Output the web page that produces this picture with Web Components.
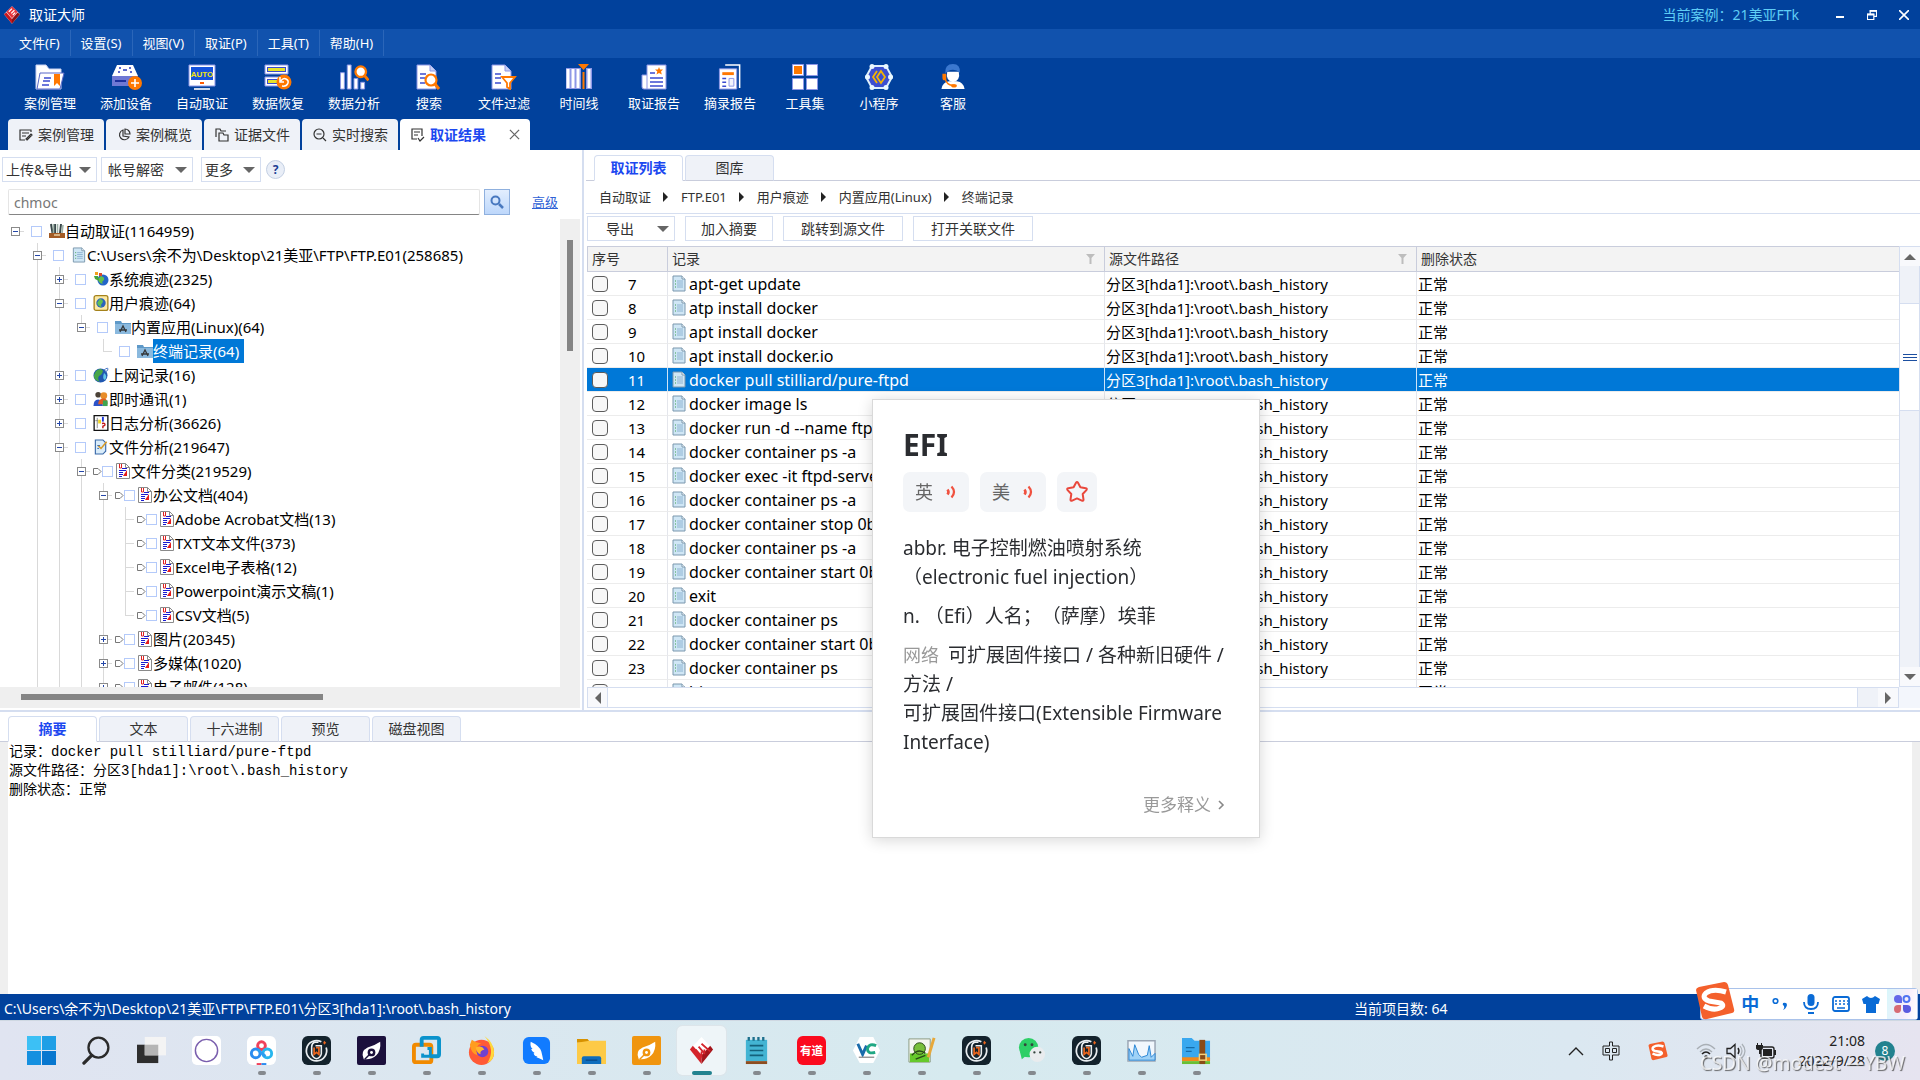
<!DOCTYPE html>
<html lang="zh-CN">
<head>
<meta charset="utf-8">
<title>取证大师</title>
<style>
  html, body { height: 100%; }
  body {
    margin: 0;
    overflow: hidden;
    background: #fff;
    color: #333;
    font: 14px/20px "Noto Sans", "Noto Sans CJK SC", sans-serif;
    --navy: #01419c;
    --line: #d5def0;
    --rule: #c9cddc;
    --pale: #eff2f8;
    --pick: #0078d7;
    --accent: #1c48f0;
  }
</style>
</head>
<body>
<forensic-app></forensic-app>

<script>
const ICONS = {
  // brand
  logo: ["0 0 20 22", `<path d="M10 0 20 10 10 22 0 10Z" fill="#f4f4f6"/><path d="M0 10 10 22V16L3 8Z" fill="#c8161d"/><path d="M20 10 10 22V16L17 8Z" fill="#8e1015"/><path d="M3 7 10 0 17 7 10 15Z" fill="#e8333a"/><path d="M6 7l4-4M9 9l4-4M11 11l3-3" stroke="#fff" stroke-width="1.6"/>`],

  // main tool bar
  caseBox: ["0 0 30 26", `<path d="M1 25V1h10l3 4h12v20Z" fill="#fff" stroke="#c9d2f3"/><path d="M5 9h24l-4 16H2Z" fill="#fff" stroke="#5868c8"/><path d="M9 14h7M8 17h7M7 21h7" stroke="#3b4bd0" stroke-width="1.6"/><path d="M19 10h6v12l-3-3-3 3Z" fill="#ff7800"/>`],
  addDisk: ["0 0 32 26", `<path d="M7 1h16l5 11H2Z" fill="#fff"/><path d="M2 12h26v10H2Z" fill="#6f78d4"/><path d="M5 17h11" stroke="#1d2f9e" stroke-width="2"/><path d="M9 4h2M19 4h2M8 8h2M20 8h2M13 6h4" stroke="#5d68cc" stroke-width="2"/><circle cx="25" cy="19" r="7" fill="#ff7800"/><path d="M25 15v8M21 19h8" stroke="#fff" stroke-width="1.6"/>`],
  auto: ["0 0 28 26", `<path d="M1 1h26v21H1Z" fill="#fff" stroke="#8d97e6"/><path d="M3 3h22v13H3Z" fill="#1452dc"/><text x="14" y="13" text-anchor="middle" font-family="Liberation Sans" font-size="8" font-weight="700" fill="#f4e60c">AUTO</text><path d="M12 19h4" stroke="#ff5a00" stroke-width="2"/><path d="M6 25h16" stroke="#fff" stroke-width="1.6"/>`],
  restore: ["0 0 28 26", `<path d="M1 1h23v9H1Z" fill="#fff" stroke="#8d97e6"/><path d="M3 5.500h19" stroke="#3b4bd0" stroke-width="5"/><path d="M4 5.500h17" stroke="#e6e32a" stroke-width="3"/><path d="M1 13h16v9H1Z" fill="#fff" stroke="#8d97e6"/><path d="M3 17.500h11" stroke="#3b4bd0" stroke-width="5"/><path d="M4 17.500h9" stroke="#e6e32a" stroke-width="3"/><circle cx="20" cy="18" r="7.500" fill="#ff7800"/><path d="M18 22c6 1 8-5 4-7-2-1-4 0-5 2M16 13v5h4" fill="none" stroke="#fff" stroke-width="1.500"/>`],
  analyse: ["0 0 30 27", `<g fill="#fff" stroke="#8d97e6"><path d="M1 9h4v17H1ZM8 1h4v25H8ZM15 15h4v11h-4ZM22 19h4v7h-4Z"/></g><circle cx="22" cy="8" r="5.5" fill="#fff" stroke="#ff7800" stroke-width="2.4"/><path d="m26 12 4 5" stroke="#ff7800" stroke-width="3"/>`],
  search: ["0 0 26 26", `<path d="M1 1h13l6 6v18H1Z" fill="#fff" stroke="#8d97e6"/><path d="M14 1v6h6" fill="#c8d0f5" stroke="#8d97e6"/><path d="M4 10h6M4 14h5M4 19h5" stroke="#3b4bd0" stroke-width="1.6"/><circle cx="15" cy="16" r="5.5" fill="#fff" stroke="#ff7800" stroke-width="2.2"/><path d="m19 20 4 5" stroke="#ff7800" stroke-width="3"/>`],
  filter: ["0 0 26 26", `<path d="M1 1h13l6 6v18H1Z" fill="#fff" stroke="#8d97e6"/><path d="M14 1v6h6" fill="#c8d0f5" stroke="#8d97e6"/><path d="M4 10h6M4 14h6M4 19h6" stroke="#3b4bd0" stroke-width="1.6"/><path d="M11 13h13l-5 6v6l-3-2v-4Z" fill="#fff" stroke="#ff7800" stroke-width="1.8"/>`],
  timeline: ["0 0 28 26", `<path d="M1 4h15v21H1ZM21 4h6v21h-6Z" fill="#8d97e6"/><path d="M3 5v19M8 5v19M13 5v19M24 5v19" stroke="#fff" stroke-width="3"/><path d="M13 0h11l-5.500 6Z" fill="#ff7800"/><path d="M18.500 8v17" stroke="#ff7800" stroke-width="2"/>`],
  report: ["0 0 26 26", `<path d="M6 1h19v24H3q-2 0-2-2V11h5Z" fill="#fff" stroke="#8d97e6"/><path d="M6 11v14" stroke="#8d97e6"/><path d="M9 9h5M9 14h13M9 18h13M9 22h13" stroke="#3b4bd0" stroke-width="1.600"/><path d="m18 3 1 2.500h3L20 7.500l.8 3L18 9l-2.500 1.500.8-3L14 5.500h3Z" fill="#ff7800"/>`],
  excerpt: ["0 0 24 27", `<path d="M7 1h15v24" fill="none" stroke="#fff" stroke-width="1.600"/><path d="M1 5h18v21H1Z" fill="#fff" stroke="#8d97e6"/><path d="M4 10h12" stroke="#ff7800" stroke-width="3"/><path d="M4 15h4M4 19h4M4 23h4" stroke="#3b4bd0" stroke-width="1.600"/><path d="M11 15h5v8h-5Z" fill="#f2f4fc" stroke="#8d97e6"/>`],
  tools: ["0 0 26 26", `<g fill="#fff" stroke="#8d97e6"><path d="M.500.500h11v11H.500ZM14.500.500h11v11h-11ZM.500 14.500h11v11H.500ZM14.500 14.500h11v11h-11Z"/></g><path d="M2 2h8v8H2Z" fill="#ff7800"/>`],
  applet: ["0 0 28 26", `<path d="M7 2h14l6 11-6 11H7L1 13Z" fill="#3c4fd0" stroke="#dff0fb" stroke-width="2"/><g fill="#eaf8ff"><circle cx="7" cy="2.500" r="2.500"/><circle cx="21" cy="2.500" r="2.500"/><circle cx="2.500" cy="13" r="2.500"/><circle cx="25.500" cy="13" r="2.500"/><circle cx="7" cy="23.500" r="2.500"/><circle cx="21" cy="23.500" r="2.500"/></g><path d="M12 7 8 13l4 6M16 7l-4 6 4 6 4-6Z" fill="none" stroke="#f5b400" stroke-width="1.800"/>`],
  service: ["0 0 26 27", `<path d="M1 26q1-7 8-8h8q7 1 8 8Z" fill="#fff"/><path d="M7 8h12q2 9-6 11-8-2-6-11Z" fill="#fff"/><path d="M5 10Q4 0 13 0q8 0 7 9-3-3-7-3-5 0-8 4Z" fill="#3b78cf"/><path d="M2 10h4v7H4q-2 0-2-3Z" fill="#ff7800"/><path d="M5 16q2 6 8 6" fill="none" stroke="#ff7800" stroke-width="1.500"/><ellipse cx="14" cy="22.500" rx="3" ry="1.800" fill="#ff7800"/>`],

  // page tabs
  tabEdit: ["0 0 14 14", `<path d="M6 12H1V2h11v2M3 5h7M3 8h4M8 12l5-5-1-1-5 5Z" fill="none" stroke="#333" stroke-width="1.200"/>`],
  tabPie: ["0 0 14 14", `<path d="M6 2a5 5 0 1 0 6 7L6 8Z M8 1v5h5a5 5 0 0 0-5-5Z" fill="none" stroke="#333" stroke-width="1.200"/>`],
  tabFiles: ["0 0 14 14", `<path d="M1 9V1h4l1 2h5M4 13V5h4l1 2h4v6Z" fill="none" stroke="#333" stroke-width="1.200"/>`],
  tabLive: ["0 0 14 14", `<circle cx="6" cy="6" r="5" fill="none" stroke="#333" stroke-width="1.200"/><path d="M3.500 6h5M10 10l3 3" stroke="#333" stroke-width="1.200"/>`],
  tabResult: ["0 0 14 14", `<path d="M6 11H1V1h10v7M3 4h6M3 7h4M7 10l2 3 4-4" fill="none" stroke="#333" stroke-width="1.200"/>`],
  close: ["0 0 12 12", `<path d="m1 1 10 10M11 1 1 11" stroke="#666" stroke-width="1.400"/>`],

  // title bar buttons
  winMin: ["0 0 10 10", `<path d="M1 7h8" stroke="#fff" stroke-width="2"/>`],
  winRestore: ["0 0 11 11", `<path d="M3.500 4V1h7v6H8M.500 4.500h7v6h-7Z" fill="none" stroke="#fff" stroke-width="1.300"/><path d="M3 1h8M0 5h8" stroke="#fff" stroke-width="2"/>`],
  winClose: ["0 0 10 10", `<path d="m0 0 10 10M10 0 0 10" stroke="#fff" stroke-width="1.600"/>`],

  // side pane
  magnifier: ["0 0 14 14", `<circle cx="5.500" cy="5.500" r="4" fill="none" stroke="#4878bf" stroke-width="2"/><path d="m9 9 4 4" stroke="#4878bf" stroke-width="2.500"/>`],
  tDesk: ["0 0 16 16", `<path d="M0 10h16v5H0Z" fill="#a35b24"/><path d="M5 12h6" stroke="#e9cfa2" stroke-width="1.500"/><path d="M2 1l1.500 9M6 1v9M12 1l-1 9" stroke="#39484a" stroke-width="2"/><path d="M4.500 1v9M8.500 1v9M14 2l-1 8" stroke="#9fb3a8" stroke-width="1.600"/>`],
  doc: ["0 0 14 17", `<path d="M1 1h9l3 3v12H1Z" fill="#cfe6f5" stroke="#7b97ad"/><path d="M10 1v3h3" fill="#fff" stroke="#7b97ad"/><path d="M3 6h1M3 9h1M3 12h1" stroke="#3da04c"/><path d="M5 6h6M5 8h6M5 10h6M5 12h6" stroke="#7fa7c9" stroke-width=".8"/>`],
  tSystem: ["0 0 16 16", `<circle cx="10" cy="9" r="5.500" fill="#2465c8"/><path d="M8 5q4 1 3 4-3 2-1 4-5-1-5-5Z" fill="#62bf4b"/><path d="M2 1h3v3H2Z" fill="#f2a11d"/><path d="M6 2h3v3H6Z" fill="#d94a2a"/><path d="M1 5h4l1 5-4-2Z" fill="#46a53c"/>`],
  tUser: ["0 0 16 17", `<rect x=".700" y=".700" width="14.600" height="15.600" rx="2" fill="#fbe9a4" stroke="#a5821b" stroke-width="1.400"/><circle cx="8" cy="8.500" r="5" fill="#2a63bd"/><path d="M7 4q5 2 2 5-2 2 0 4-5-1-5-5Z" fill="#5fbf56"/>`],
  tApp: ["0 0 16 14", `<path d="M0 1h6l1 2h9v11H0Z" fill="#5e99c8"/><path d="M0 4h16v10H0Z" fill="#8ab9de"/><path d="m5 12 3-6 3 6M4 10h8" fill="none" stroke="#35383b" stroke-width="1.300"/>`],
  tWeb: ["0 0 16 16", `<circle cx="7.500" cy="8.500" r="7" fill="#1f57b0"/><path d="M3 4q5-4 7 0-1 4-4 5-2 3 1 6-7-2-6-7Z" fill="#48a64a"/><path d="M11 6q4 3 1 7-3-1-1-7Z" fill="#62c6e6"/><path d="M11 3q4-3 4-1t-3 3" fill="none" stroke="#4a7ac8"/>`],
  tChat: ["0 0 16 17", `<circle cx="5" cy="4" r="3" fill="#4b4238"/><path d="M0 16q0-7 5-7t5 7Z" fill="#2c53c9"/><circle cx="11" cy="5" r="3.600" fill="#e88d2a"/><path d="M5 14q0-6 6-6 4 0 4 6Z" fill="#e05d24"/><path d="M10 10h5v6h-5Z" fill="#3fa551"/>`],
  tLog: ["0 0 16 17", `<path d="M.700.700h14.600v15.600H.700Z" fill="#fff" stroke="#111" stroke-width="1.400"/><path d="M4 3v11M2 6h3" stroke="#888"/><path d="M10 2v5" stroke="#1c36d8" stroke-width="2"/><path d="M5 5h3v4H5Z" fill="#f0d622"/><path d="M9 9q4-1 3 2l-2 1v2" fill="none" stroke="#c21919" stroke-width="1.500"/>`],
  tFile: ["0 0 16 17", `<path d="M2 1h8l3 3v9l-3 3H2Z" fill="#d9ecfa" stroke="#3868a8" stroke-width="1.200"/><path d="m5 7 3 3 6-7" fill="none" stroke="#d99924" stroke-width="1.600"/><path d="M4 7h3M4 10h2" stroke="#3868a8"/>`],
  tClass: ["0 0 14 16", `<path d="M.500.500h9l4 4v11H.500Z" fill="#fff" stroke="#8a8a8a"/><path d="M9.500.500v4h4" fill="none" stroke="#8a8a8a"/><path d="M3.500 1v4h2V1" fill="none" stroke="#d22"/><path d="M6 5.500h5M3 7.500h7M3 9.500h4M3 11.500h4M3 13.500h3" stroke="#1a1ad0"/><path d="m7 13 4-6v6Z" fill="#e51c1c"/>`],
  tag: ["0 0 9 9", `<path d="M.500 1.500H5l3 3-3 3H.500Z" fill="#fff" stroke="#777"/>`],
  funnel: ["0 0 9 11", `<path d="M0 0h9L5.500 4v6h-2V4Z" fill="#bdbdbd"/>`],

  // dictionary card
  sound: ["0 0 12 14", `<path d="M2.500 4.500q2 2.500 0 5" fill="none" stroke="#f0513f" stroke-width="2.600"/><path d="M6.500 1.500q5 5.500 0 11" fill="none" stroke="#f0513f" stroke-width="2.200"/>`],
  star: ["0 0 24 24", `<path d="M11 2.700q1-1.600 2 0l2.400 4.600 5.400.9q1.700.5.600 1.900l-3.700 3.900.8 5.600q-.1 1.600-1.700 1L12 18.400l-4.800 2.200q-1.600.6-1.700-1l.8-5.600-3.700-3.900q-1.100-1.400.6-1.900l5.400-.9Z" fill="none" stroke="#e9483c" stroke-width="2" stroke-linejoin="round"/>`],
  chevron: ["0 0 8 12", `<path d="m2 2 4 4-4 4" fill="none" stroke="#888" stroke-width="1.600"/>`],

  // input method bar
  sogou: ["0 0 40 38", `<path d="M1 8Q1 6 4 5L29 0q3 0 4 3l6 24q1 3-2 4L12 37q-4 1-5-2Z" fill="#f4602c"/><path d="M31 10Q18 6 11 11q-5 5 3 8l12 2q4 3-1 5-7 3-16-2" fill="none" stroke="#fff" stroke-width="5"/>`],
  imePunct: ["0 0 16 14", `<circle cx="3.500" cy="4" r="2.300" fill="none" stroke="#0a6bd6" stroke-width="1.600"/><path d="M11 6q4-1 4 2-1 4-4 5 2-2 1-4-2-1-1-3Z" fill="#0a6bd6"/>`],
  imeMic: ["0 0 16 20", `<rect x="4.500" y="0" width="7" height="12" rx="3.500" fill="#0a6bd6"/><path d="M1 8q0 7 7 7t7-7" fill="none" stroke="#0a6bd6" stroke-width="1.800"/><path d="M5 19h6" stroke="#0a6bd6" stroke-width="2"/>`],
  imeKeys: ["0 0 18 16", `<rect x="1" y="1" width="16" height="14" rx="2" fill="none" stroke="#0a6bd6" stroke-width="1.800"/><path d="M3 5h2M7 5h2M11 5h2M15 5h1M3 8h2M7 8h2M11 8h2M15 8h1M5 12h8" stroke="#0a6bd6" stroke-width="1.600"/>`],
  imeShirt: ["0 0 18 17", `<path d="M5 0q4 4 8 0l5 3-1.500 5H14v9H4V8H1.500L0 3Z" fill="#0a6bd6"/>`],
  imeGrid: ["0 0 18 18", `<path d="M1 4q0-4 4-4t4 4v4H5Q1 8 1 4Z" fill="#6468e8"/><circle cx="13.500" cy="4" r="3" fill="none" stroke="#4f74f2" stroke-width="2"/><path d="M1 14q0-4 4-4h3v4q0 4-3.500 4T1 14Z" fill="#d66b74"/><path d="M10 10h4q4 0 4 4t-4 4-4-4Z" fill="#5a5ae0"/>`],

  // task bar
  win: ["0 0 30 30", `<path d="M0 0h14.500v14.500H0Z" fill="#3cc0f5"/><path d="M15.500 0H30v14.500H15.500Z" fill="#1f9fe6"/><path d="M0 15.500h14.500V30H0Z" fill="#1590e0"/><path d="M15.500 15.500H30V30H15.500Z" fill="#0877cf"/>`],
  find: ["0 0 30 30", `<circle cx="17" cy="12" r="10.300" fill="none" stroke="#2a2a2a" stroke-width="2.400"/><path d="m10 20-8 8" stroke="#2a2a2a" stroke-width="3.400" stroke-linecap="round"/>`],
  views: ["0 0 30 30", `<path d="M0 9h22v19H0Z" fill="#2e2e2e"/><path d="M8 1h22v19H8Z" fill="#f4f4f4"/><path d="M8 9h14v11H8Z" fill="#b5b5b5"/>`],
  cortana: ["0 0 30 30", `<rect width="30" height="30" rx="5" fill="#fff"/><circle cx="15" cy="15" r="11.500" fill="none" stroke="#7a5fae" stroke-width="1.500"/>`],
  cloud: ["0 0 30 30", `<rect width="30" height="30" rx="6" fill="#fff"/><g fill="none" stroke-width="3"><circle cx="15" cy="10" r="4" stroke="#f0415a"/><circle cx="9" cy="18" r="4.500" stroke="#2b8cf0"/><circle cx="21" cy="18" r="4.500" stroke="#27b6ee"/></g><path d="m11 14 8 7" stroke="#2b9cf0" stroke-width="3"/><path d="M10 29h5" stroke="#f0415a" stroke-width="2"/><path d="M15 29h5" stroke="#2b8cf0" stroke-width="2"/>`],
  claw: ["0 0 30 30", `<rect width="30" height="30" rx="6" fill="#13222c"/><path d="M20 6A10.500 10.500 0 1 0 25 12" fill="none" stroke="#e9edf0" stroke-width="1.800"/><path d="M17 6.500h-4q-3 1-3 5v7q1 4 5 5 4-1 5-5V10h-6" fill="none" stroke="#e9edf0" stroke-width="1.600"/><path d="M12.500 12v7l2.500-2 2.500 2v-7h-3" fill="none" stroke="#e8641d" stroke-width="1.800"/><path d="m23 5 2 2-2 2-1-2Z" fill="#e8641d"/>`],
  quill: ["0 0 30 30", `<rect width="30" height="30" rx="2" fill="#1b103c"/><path d="M24 6q1 9-4 14-5 5-13 4-4-8 4-12 7-2 13-6Z" fill="#fff"/><circle cx="15" cy="17" r="4" fill="#1b103c"/><path d="m8 24 6-6" stroke="#1b103c" stroke-width="1.500"/><circle cx="15" cy="17" r="1.500" fill="#fff"/>`],
  vmware: ["0 0 30 30", `<rect x="2" y="9" width="18" height="18" rx="2" fill="none" stroke="#f18a00" stroke-width="4"/><path d="M10 11V4q0-2 2-2h14q2 0 2 2v15q0 2-2 2h-7" fill="none" stroke="#0b93cc" stroke-width="4"/><path d="M11 18v3h8v-8h-3" fill="none" stroke="#0b93cc" stroke-width="3"/>`],
  firefox: ["0 0 30 30", `<circle cx="15" cy="17" r="13" fill="#ff5a36"/><path d="M18 0q10 7 10 17 0 8-7 11Q30 14 18 0Z" fill="#ffd93b"/><path d="M3 9 5 4q5 4 10 3-8 4-4 13-7-2-8-11Z" fill="#ff9d1e"/><circle cx="16" cy="16" r="6" fill="#7141cf"/><path d="M9 12q6-3 9 2-5 1-4 5-4-1-5-7Z" fill="#ffb52c"/>`],
  bird: ["0 0 30 30", `<rect x="1" y="1" width="28" height="28" rx="6" fill="#117bff"/><path d="M9 6q9 4 11 10 1 4 2 9-4-2-7-3l1-1q-3 0-4-3l1-.500q-3-1-3.500-4H11Q8 11 9 6Z" fill="#fff"/>`],
  folder: ["0 0 30 30", `<path d="M0 3h11l3 4h-3H0Z" fill="#d79200"/><path d="M0 7 13 5h17v24H0Z" fill="#fdca47"/><path d="M5 29v-6q0-2 2-2h16q2 0 2 2v6Z" fill="#0e6dbd"/><path d="M9 25h12" stroke="#0a4c8c" stroke-width="1.500"/>`],
  quillGold: ["0 0 30 30", `<rect width="30" height="30" rx="2" fill="#f0950f"/><path d="M24 6q1 9-4 14-5 5-13 4-4-8 4-12 7-2 13-6Z" fill="#fff"/><circle cx="15" cy="17" r="4" fill="#f0950f"/><path d="m8 24 6-6" stroke="#f0950f" stroke-width="1.500"/><circle cx="15" cy="17" r="1.500" fill="#fff"/>`],
  redLogo: ["0 0 30 30", `<path d="M15 1 27 14 15 29 3 14Z" fill="#fff"/><path d="M3 14 15 29V20L6 10Z" fill="#d4242b"/><path d="M27 14 15 29V20l9-10Z" fill="#a3151b"/><path d="m9 14 6 7v-5M12 11l6 7M15 8l9 8M18 14v5" stroke="#d4242b" stroke-width="1.800" fill="none"/>`],
  notepad: ["0 0 30 30", `<path d="M4 4h22v22H4Z" fill="#43b4d3"/><path d="M4 26h22v3H4Z" fill="#8c4d20"/><path d="M7 1v4M12 1v4M17 1v4M22 1v4" stroke="#1c6f8c" stroke-width="2.400"/><path d="M8 10h14M8 15h14M8 20h14" stroke="#14617c" stroke-width="1.800"/>`],
  youdao: ["0 0 30 30", `<rect width="30" height="30" rx="6" fill="#fb0a1e"/><text x="15" y="20" text-anchor="middle" font-family="Noto Sans CJK SC" font-size="12" font-weight="700" fill="#fff">有道</text>`],
  vera: ["0 0 30 30", `<path d="M8 1h14l7 14-7 13H8L1 15Z" fill="#fff"/><path d="m6 8 5 11 4-9" fill="none" stroke="#1a6cab" stroke-width="3"/><path d="M25 10q-7-3-9 3 0 6 8 4" fill="none" stroke="#20a884" stroke-width="3"/><path d="M7 22h16" stroke="#999" stroke-width="1.500"/>`],
  npp: ["0 0 30 30", `<path d="M2 3h22v24H2Z" fill="#f4f6f0" stroke="#8b9a83"/><path d="M3 18h20v9H3Z" fill="#65c92c"/><circle cx="13" cy="13" r="6" fill="#78bf3b" stroke="#284a16"/><path d="M5 20q7-8 14-2M9 24l10-4" stroke="#284a16" stroke-width="1.500" fill="none"/><path d="m28 2-6 20" stroke="#e7a83a" stroke-width="3"/>`],
  wechat: ["0 0 30 30", `<circle cx="12" cy="12" r="10" fill="#2dcf66"/><path d="m3 16 2 8 5-4Z" fill="#2dcf66"/><circle cx="21" cy="19" r="8" fill="#e9ecee"/><g fill="#33443c"><circle cx="8.500" cy="9" r="1.500"/><circle cx="15.500" cy="9" r="1.500"/><circle cx="18" cy="17" r="1.200"/><circle cx="24" cy="17" r="1.200"/></g>`],
  monitor: ["0 0 30 30", `<path d="M1 5h28v21H1Z" fill="#f1f7fd" stroke="#9aa5b3" stroke-width="1.500"/><path d="M2 25V13l4 8 2-12 4 10 3 3 6-2 2-10 2 12 4-4v7Z" fill="#9fd2f7" stroke="#2a86d4"/>`],
  zip: ["0 0 30 30", `<path d="M0 2h10l3 3h16v19H0Z" fill="#39a8ef"/><path d="M0 22h29v4H0Z" fill="#f08a1c"/><path d="M0 26h29v3H0Z" fill="#6abf34"/><path d="M18 4h6v25h-6Z" fill="#8a4b16"/><rect x="18" y="19" width="7" height="6" fill="none" stroke="#f6d27a" stroke-width="1.500"/><path d="M4 12h9M4 16h6" stroke="#166ba8" stroke-width="1.300"/>`],

  // tray
  up: ["0 0 16 10", `<path d="m1 9 7-7 7 7" fill="none" stroke="#222" stroke-width="1.400"/>`],
  zhong: ["0 0 18 20", `<path d="M7.500 1h3v4H17v9h-6.500v5h-3v-5H1V5h6.500ZM3.500 7.500v4h4v-4ZM10.500 7.500v4h4v-4Z" fill="none" stroke="#222"/>`],
  wifi: ["0 0 20 16", `<path d="M1 6q9-9 18 0" fill="none" stroke="#a9afb5" stroke-width="1.400"/><path d="M4 9q6-6 12 0" fill="none" stroke="#a9afb5" stroke-width="1.400"/><path d="M6 11q4-4 8 0" fill="none" stroke="#222" stroke-width="1.600"/><circle cx="10" cy="14" r="1.800" fill="#222"/>`],
  speaker: ["0 0 20 16", `<path d="M1 5.500h3.500L9 1.500v13l-4.500-4H1Z" fill="none" stroke="#222" stroke-width="1.300"/><path d="M12 5q2 3 0 6" fill="none" stroke="#222" stroke-width="1.400"/><path d="M14 3q4 5 0 10M16 1q6 7 0 14" fill="none" stroke="#a9afb5" stroke-width="1.200"/>`],
  battery: ["0 0 20 16", `<rect x="5" y="4" width="13" height="11" rx="2" fill="none" stroke="#222" stroke-width="1.400"/><path d="M7 6h9v7H7ZM18 7h2v5h-2Z" fill="#222"/><path d="M0 2h7v3q0 2-2 2v4H3V7Q0 7 0 5ZM1 0h1v3H1ZM5 0h1v3H5Z" fill="#222"/>`]
};

const svg = (name, w, h = w) => {
  const [box, body] = ICONS[name];
  return `<svg viewBox="${box}" width="${w}" height="${h}" aria-hidden="true">${body}</svg>`;
};

const esc = (s) => s.replaceAll("&", "&amp;").replaceAll("<", "&lt;");

const BASE = `
  *, *::before, *::after { box-sizing: border-box; }
  svg { display: block; flex: none; }
  button, input, select { font: inherit; color: inherit; margin: 0; }
  button { border: 0; background: none; padding: 0; cursor: pointer; }
`;

class BaseElement extends HTMLElement {
  constructor() {
    super();
    this.attachShadow({ mode: "open" });
  }

  connectedCallback() {
    this.shadowRoot.innerHTML = `<style>${BASE}${this.styles()}</style>${this.markup()}`;
  }

  styles() { return ""; }
  markup() { return ""; }
}

class ForensicApp extends BaseElement {
  styles() {
    return `
      :host { display: grid; grid-template-columns: minmax(0, 1fr); grid-template-rows: auto auto auto minmax(0, 140fr) minmax(0, 71fr) auto auto; height: 100vh; }
      main { min-height: 0; display: flex; }
      side-pane { flex: 0 0 584px; border-right: 2px solid var(--line); }
      result-pane { flex: 1; min-width: 0; margin-left: 2px; }
    `;
  }

  markup() {
    return `
      <title-bar></title-bar>
      <menu-bar></menu-bar>
      <tool-bar></tool-bar>
      <main>
        <side-pane></side-pane>
        <result-pane></result-pane>
      </main>
      <detail-pane></detail-pane>
      <status-bar>
        <span>C:\\Users\\余不为\\Desktop\\21美亚\\FTP\\FTP.E01\\分区3[hda1]:\\root\\.bash_history</span>
        <span slot="count">当前项目数: 64</span>
      </status-bar>
      <task-bar></task-bar>
      <dict-card></dict-card>
      <ime-bar></ime-bar>
      <water-mark>CSDN @modest —YBW</water-mark>
    `;
  }
}

class TitleBar extends BaseElement {
  styles() {
    return `
      :host { display: flex; align-items: center; height: 29px; padding: 0 11px 0 4px; background: var(--navy); color: #fff; }
      h1 { margin: 0 auto 0 9px; font-size: 14px; font-weight: 400; }
      .case { margin-right: 36px; color: #5fcdf5; }
      .buttons { display: flex; gap: 22px; }
    `;
  }

  markup() {
    return `
      ${svg("logo", 16, 20)}
      <h1>取证大师</h1>
      <span class="case">当前案例：21美亚FTk</span>
      <div class="buttons">
        <button aria-label="最小化">${svg("winMin", 10)}</button>
        <button aria-label="还原">${svg("winRestore", 10)}</button>
        <button aria-label="关闭">${svg("winClose", 10)}</button>
      </div>
    `;
  }
}

class MenuBar extends BaseElement {
  styles() {
    return `
      :host { display: flex; align-items: flex-start; height: 29px; padding: 1px 0 0 9px; background: #1152ad; color: #fff; font-size: 13px; }
      button { height: 26px; padding: 0 10px; border-right: 1px solid #2b66b9; }
    `;
  }

  markup() {
    return ["文件(F)", "设置(S)", "视图(V)", "取证(P)", "工具(T)", "帮助(H)"]
      .map((t) => `<button>${t}</button>`).join("");
  }
}

const TOOLS = [
  ["caseBox", "案例管理", 30], ["addDisk", "添加设备", 32], ["auto", "自动取证", 28],
  ["restore", "数据恢复", 28], ["analyse", "数据分析", 30], ["search", "搜索", 26],
  ["filter", "文件过滤", 26], ["timeline", "时间线", 28], ["report", "取证报告", 26],
  ["excerpt", "摘录报告", 24], ["tools", "工具集", 26], ["applet", "小程序", 28],
  ["service", "客服", 26]
];

const PAGES = [
  ["tabEdit", "案例管理"], ["tabPie", "案例概览"], ["tabFiles", "证据文件"],
  ["tabLive", "实时搜索"], ["tabResult", "取证结果"]
];

class ToolBar extends BaseElement {
  styles() {
    return `
      :host { display: block; background: var(--navy); color: #fff; }
      .tools { display: flex; padding: 6px 12px 0; height: 61px; }
      .tools button { min-width: 74px; padding: 0 12px; display: flex; flex-direction: column; align-items: center; gap: 3px; font-size: 13px; line-height: 20px; }
      .tabs { display: flex; gap: 2px; padding: 0 8px; }
      .tab { display: flex; align-items: center; gap: 5px; height: 31px; width: 96px; padding-left: 11px; background: var(--pale); color: #333; border-radius: 4px 4px 0 0; white-space: nowrap; }
      .tab[aria-selected=true] { width: 130px; background: #fff; color: var(--accent); font-weight: 700; }
      .tab svg:last-child:not(:first-child) { margin-left: auto; margin-right: 10px; }
    `;
  }

  markup() {
    const tools = TOOLS.map(([i, t, w]) => `<button>${svg(i, w, 26)}${t}</button>`).join("");
    const tabs = PAGES.map(([i, t], n) => {
      const on = n === PAGES.length - 1;
      return `<button class="tab" role="tab" aria-selected="${on}">${svg(i, 14)}${t}${on ? svg("close", 11) : ""}</button>`;
    }).join("");
    return `<div class="tools">${tools}</div><div class="tabs" role="tablist">${tabs}</div>`;
  }
}

// Drop-down with the flat frame and the dark triangle.
class DropDown extends BaseElement {
  styles() {
    return `
      :host { display: flex; position: relative; height: 25px; }
      select { appearance: none; width: 100%; border: 1px solid var(--line); border-radius: 0; background: #fff; padding: 0 0 0 var(--pad, 3px); }
      i { position: absolute; right: 6px; top: 10px; border: 6px solid transparent; border-top-color: #666; border-bottom: 0; pointer-events: none; }
    `;
  }

  markup() {
    const t = esc(this.getAttribute("text"));
    return `<select aria-label="${t}"><option>${t}</option></select><i></i>`;
  }
}

class PanelTabs extends BaseElement {
  styles() {
    return `
      :host { display: flex; gap: 2px; padding: 0 8px; border-bottom: 1px solid var(--rule); }
      button { width: 89px; height: 26px; margin-bottom: -1px; border: 1px solid var(--line); border-bottom-color: var(--rule); border-radius: 4px 4px 0 0; background: var(--pale); color: #333; }
      button[aria-selected=true] { background: #fff; border-bottom-color: #fff; color: var(--accent); font-weight: 700; }
    `;
  }

  markup() {
    return this.getAttribute("tabs").split(",")
      .map((t, n) => `<button role="tab" aria-selected="${n === 0}">${t}</button>`).join("");
  }
}

// level, icon, label, expander ("+", "-" or ""), flags: l = last child, t = tag, s = selected
const TREE = [
  [0, "tDesk", "自动取证(1164959)", "-", "l"],
  [1, "doc", "C:\\Users\\余不为\\Desktop\\21美亚\\FTP\\FTP.E01(258685)", "-", ""],
  [2, "tSystem", "系统痕迹(2325)", "+", ""],
  [2, "tUser", "用户痕迹(64)", "-", ""],
  [3, "tApp", "内置应用(Linux)(64)", "-", "l"],
  [4, "tApp", "终端记录(64)", "", "ls"],
  [2, "tWeb", "上网记录(16)", "+", ""],
  [2, "tChat", "即时通讯(1)", "+", ""],
  [2, "tLog", "日志分析(36626)", "+", ""],
  [2, "tFile", "文件分析(219647)", "-", ""],
  [3, "tClass", "文件分类(219529)", "-", "t"],
  [4, "tClass", "办公文档(404)", "-", "t"],
  [5, "tClass", "Adobe Acrobat文档(13)", "", "t"],
  [5, "tClass", "TXT文本文件(373)", "", "t"],
  [5, "tClass", "Excel电子表格(12)", "", "t"],
  [5, "tClass", "Powerpoint演示文稿(1)", "", "t"],
  [5, "tClass", "CSV文档(5)", "", "tl"],
  [4, "tClass", "图片(20345)", "+", "t"],
  [4, "tClass", "多媒体(1020)", "+", "t"],
  [4, "tClass", "电子邮件(128)", "+", "t"]
];

class EvidenceTree extends BaseElement {
  styles() {
    return `
      :host { display: block; overflow: hidden; background: #fff; color: #000; font-size: 15px; line-height: 24px; }
      ul { list-style: none; margin: 0; padding: 0 0 0 5px; }
      li { display: flex; align-items: center; height: 24px; white-space: nowrap; }
      .g { position: relative; flex: none; width: 22px; height: 24px; }
      .up::before, .down::after { content: ""; position: absolute; left: 10px; width: 1px; background: #d9d9d9; }
      .up::before { top: 0; height: 12px; }
      .down::after { top: 12px; height: 12px; }
      .g i { position: absolute; left: 10px; top: 12px; width: 9px; height: 1px; background: #d9d9d9; }
      .g button { position: absolute; z-index: 1; left: 6px; top: 8px; width: 9px; height: 9px; border: 1px solid #8a8a8a; background: #fff; }
      .g button::before, .plus::after { content: ""; position: absolute; left: 1px; top: 3px; width: 5px; height: 1px; background: #2446a8; }
      .g .plus::after { left: 3px; top: 1px; width: 1px; height: 5px; }
      .lead { display: flex; align-items: center; flex: none; width: 21px; padding-left: 4px; }
      .lead.tag { padding-left: 0; }
      input { appearance: none; flex: none; width: 11px; height: 11px; border: 1px solid #b4cafa; background: #fff; }
      .pic { display: flex; justify-content: center; flex: none; width: 17px; }
      label.sel { background: var(--pick); color: #fff; padding-right: 5px; }
    `;
  }

  markup() {
    const open = [];
    const rows = TREE.map(([lv, icon, text, exp, flags], n) => {
      const more = !flags.includes("l");
      let guides = "";
      for (let k = 0; k < lv; k++) guides += `<span class="g ${open[k] ? "up down" : ""}"></span>`;
      open[lv] = more;
      const box = exp
        ? `<button class="${exp === "+" ? "plus" : "minus"}" aria-label="${exp === "+" ? "展开" : "折叠"}"></button>`
        : "";
      guides += `<span class="g ${lv ? "up" : ""} ${more ? "down" : ""}"><i></i>${box}</span>`;
      const tag = flags.includes("t");
      const w = icon === "doc" || icon === "tClass" ? 14 : 16;
      return `
        <li role="treeitem" aria-level="${lv + 1}">${guides}
          <span class="lead ${tag ? "tag" : ""}">${tag ? svg("tag", 9) : ""}<input type="checkbox" id="n${n}"></span>
          <span class="pic">${svg(icon, w, 16)}</span>
          <label for="n${n}" class="${flags.includes("s") ? "sel" : ""}">${esc(text)}</label>
        </li>`;
    }).join("");
    return `<ul role="tree">${rows}</ul>`;
  }
}

class SidePane extends BaseElement {
  styles() {
    return `
      :host { display: flex; flex-direction: column; min-height: 0; padding-right: 2px; }
      .actions { display: flex; align-items: center; padding: 7px 2px 0; gap: 4px; }
      .actions drop-down:nth-of-type(1) { width: 95px; }
      .actions drop-down:nth-of-type(2) { width: 92px; --pad: 6px; }
      .actions drop-down:nth-of-type(3) { width: 60px; margin-left: 4px; }
      .help { width: 19px; height: 19px; margin-left: 1px; border: 1px solid #c3cfe3; border-radius: 50%; background: #e9eef7; color: #1c3f94; font-size: 12px; line-height: 16px; font-weight: 700; }
      form { display: flex; align-items: center; padding: 7px 22px 0 8px; margin-bottom: 4px; }
      input { flex: 1; min-width: 0; height: 26px; padding: 0 5px; border: 1px solid #e5e5e5; border-bottom-color: #858585; border-radius: 2px; outline: 0; background: #fff; color: #777; font-size: 14px; }
      .go { display: grid; place-items: center; width: 26px; height: 26px; margin: 0 22px 0 4px; border: 1px solid #8fb0de; background: linear-gradient(#e2eefe, #bdd7fb); }
      a { color: #2f62d6; font-size: 13px; }
      .body { flex: 1; min-height: 0; display: grid; grid-template: minmax(0, 1fr) 21px / minmax(0, 1fr) 20px; margin-bottom: 2px; background: #efefef; }
      .v { justify-self: center; width: 6px; height: 111px; margin-top: 21px; background: #858585; }
      .h { width: 302px; height: 6px; margin: 7px 0 0 21px; background: #858585; }
    `;
  }

  markup() {
    return `
      <div class="actions">
        <drop-down text="上传&amp;导出"></drop-down>
        <drop-down text="帐号解密"></drop-down>
        <drop-down text="更多"></drop-down>
        <button class="help" aria-label="帮助">?</button>
      </div>
      <form>
        <input type="text" value="chmoc" aria-label="搜索">
        <button type="button" class="go" aria-label="搜索">${svg("magnifier", 14)}</button>
        <a href="#">高级</a>
      </form>
      <div class="body">
        <evidence-tree></evidence-tree>
        <div class="v"></div>
        <div class="h"></div>
      </div>
    `;
  }
}

const COMMANDS = [
  "apt-get update", "atp install docker", "apt install docker", "apt install docker.io",
  "docker pull stilliard/pure-ftpd", "docker image ls", "docker run -d --name ftpd-server",
  "docker container ps -a", "docker exec -it ftpd-server bash", "docker container ps -a",
  "docker container stop 0b", "docker container ps -a", "docker container start 0b", "exit",
  "docker container ps", "docker container start 0b", "docker container ps", "history"
];

class RecordTable extends BaseElement {
  styles() {
    return `
      :host { display: block; overflow: hidden; background: #fff; }
      table { width: 100%; table-layout: fixed; border-collapse: separate; border-spacing: 0; color: #000; font-size: 15px; }
      .no { width: 81px; } .rec { width: 437px; } .path { width: 312px; }
      th { height: 26px; padding: 0 4px; border: solid var(--rule); border-width: 1px 1px 1px 0; background: #f3f3f3; color: #333; font-size: 14px; font-weight: 400; text-align: left; line-height: 20px; }
      th:first-child { border-left-width: 1px; }
      th:last-child { border-right: 0; }
      th div, td div { display: flex; align-items: center; }
      th svg { margin: 0 5px 0 auto; }
      td { height: 24px; padding: 0 0 0 1px; border-bottom: 1px solid #ececec; border-right: 1px solid #e4e6ec; line-height: 22px; white-space: nowrap; overflow: hidden; }
      td:last-child { border-right: 0; }
      td:first-child div { padding-left: 4px; gap: 20px; }
      td:nth-child(2) { padding-left: 4px; font-size: 16px; }
      td svg { margin-right: 3px; }
      input { appearance: none; flex: none; width: 16px; height: 16px; border: 1px solid #5c5c5c; border-radius: 4px; background: #f7f7f7; }
      tr.sel td { background: var(--pick); color: #fff; border-right-color: #cfe4f7; }
    `;
  }

  markup() {
    const rows = COMMANDS.map((cmd, n) => `
      <tr class="${n === 4 ? "sel" : ""}">
        <td><div><input type="checkbox" id="r${n}" aria-label="选择 ${n + 7}"><label for="r${n}">${n + 7}</label></div></td>
        <td><div>${svg("doc", 14, 17)}${cmd}</div></td>
        <td>分区3[hda1]:\\root\\.bash_history</td>
        <td>正常</td>
      </tr>`).join("");
    return `
      <table>
        <colgroup><col class="no"><col class="rec"><col class="path"><col></colgroup>
        <thead><tr>
          <th>序号</th>
          <th><div>记录${svg("funnel", 9, 11)}</div></th>
          <th><div>源文件路径${svg("funnel", 9, 11)}</div></th>
          <th>删除状态</th>
        </tr></thead>
        <tbody>${rows}</tbody>
      </table>`;
  }
}

// Scroll bar with end buttons; parts="before,thumb,after" are the flex shares of the track.
class ScrollBar extends BaseElement {
  styles() {
    return `
      :host { display: flex; flex-direction: column; background: var(--pale); border: 1px solid var(--line); }
      :host([horizontal]) { flex-direction: row; }
      button { flex: none; display: grid; place-items: center; width: 20px; height: 19px; background: #f8f9fc; }
      button i { border: 6px solid transparent; }
      .up { border-bottom: 6px solid #666; border-top: 0; }
      .down { border-top: 6px solid #666; border-bottom: 0; }
      .left { border-right: 6px solid #666; border-left: 0; }
      .right { border-left: 6px solid #666; border-right: 0; }
      .thumb { display: grid; place-content: center; gap: 2px; background: #fff; outline: 1px solid var(--line); }
      :host(:not([horizontal])) .thumb i { width: 14px; height: 1px; background: #1c4fa0; }
    `;
  }

  markup() {
    const [a, b, c] = this.getAttribute("parts").split(",");
    const [d1, d2] = this.hasAttribute("horizontal") ? ["left", "right"] : ["up", "down"];
    return `
      <button aria-label="${d1}"><i class="${d1}"></i></button>
      <span style="flex:${a} 1 0"></span>
      <span class="thumb" style="flex:${b} 1 0"><i></i><i></i><i></i></span>
      <span style="flex:${c} 1 0"></span>
      <button aria-label="${d2}"><i class="${d2}"></i></button>`;
  }
}

class ResultPane extends BaseElement {
  styles() {
    return `
      :host { display: flex; flex-direction: column; }
      panel-tabs { margin-top: 5px; }
      nav { display: flex; align-items: center; height: 33px; padding-left: 13px; border-bottom: 1px solid var(--line); font-size: 13px; }
      nav a { color: #333; text-decoration: none; }
      nav i { margin: 0 13px 0 12px; border: 5px solid transparent; border-left-color: #222; border-right: 0; }
      .actions { display: flex; gap: 10px; padding: 2px 0 5px 1px; }
      .actions button { height: 25px; width: 120px; border: 1px solid var(--line); background: #fff; }
      .actions .short, drop-down { width: 88px; }
      drop-down { --pad: 18px; }
      .grid { flex: 1; min-height: 0; display: grid; grid-template: minmax(0, 1fr) 21px / minmax(0, 1fr) 21px; margin: 0 0 2px 1px; background: #f3f6fc; }
    `;
  }

  markup() {
    const path = ["自动取证", "FTP.E01", "用户痕迹", "内置应用(Linux)", "终端记录"]
      .map((t) => `<a href="#">${t}</a>`).join("<i></i>");
    return `
      <panel-tabs tabs="取证列表,图库"></panel-tabs>
      <nav>${path}</nav>
      <div class="actions">
        <drop-down text="导出"></drop-down>
        <button class="short">加入摘要</button>
        <button>跳转到源文件</button>
        <button>打开关联文件</button>
      </div>
      <div class="grid">
        <record-table></record-table>
        <scroll-bar parts="38,106,256"></scroll-bar>
        <scroll-bar horizontal parts="0,1250,21"></scroll-bar>
      </div>
    `;
  }
}

class DetailPane extends BaseElement {
  styles() {
    return `
      :host { display: flex; flex-direction: column; border-top: 2px solid var(--line); }
      panel-tabs { margin-top: 4px; }
      .text { flex: 1; padding: 1px 1px; border: solid #efefef; border-width: 0 8px; color: #000; font: 14px/19px "Liberation Mono", "Noto Sans CJK SC", monospace; }
      p { margin: 0; }
    `;
  }

  markup() {
    return `
      <panel-tabs tabs="摘要,文本,十六进制,预览,磁盘视图"></panel-tabs>
      <div class="text">
        <p>记录：docker pull stilliard/pure-ftpd</p>
        <p>源文件路径：分区3[hda1]:\\root\\.bash_history</p>
        <p>删除状态：正常</p>
      </div>
    `;
  }
}

class StatusBar extends BaseElement {
  styles() {
    return `
      :host { display: grid; grid-template-columns: 1354fr 566fr; align-items: center; height: 26px; padding-top: 3px; background: var(--navy); color: #fff; }
      div { padding-left: 4px; white-space: nowrap; }
      div + div { padding-left: 0; }
    `;
  }

  markup() {
    return `<div><slot></slot></div><div><slot name="count"></slot></div>`;
  }
}

const APPS = [
  ["win", ""], ["find", ""], ["views", ""], ["cortana", ""], ["cloud", "run"], ["claw", "run"],
  ["quill", "run"], ["vmware", "run"], ["firefox", "run"], ["bird", "run"], ["folder", "run"],
  ["quillGold", "run"], ["redLogo", "run on"], ["notepad", "run"], ["youdao", "run"], ["vera", "run"],
  ["npp", "run"], ["claw", "run"], ["wechat", "run"], ["claw", "run"], ["monitor", "run"], ["zip", "run"]
];

class TaskBar extends BaseElement {
  styles() {
    return `
      :host { display: flex; align-items: center; height: 60px; padding: 0 25px 0 14px; background: linear-gradient(90deg, #e0e4f1, #dbe7f0 22%, #d6eaef 50%, #dbe8f1 82%, #e6e4f0); border-top: 1px solid #cfd8e2; color: #222; }
      .apps { display: flex; margin-right: auto; }
      .apps button { position: relative; display: grid; place-items: center; width: 49px; height: 49px; margin: 0 3px; border-radius: 5px; }
      .run::after { content: ""; position: absolute; left: 50%; bottom: 0; width: 8px; height: 4px; margin-left: -4px; border-radius: 2px; background: #85898e; }
      .apps .on { background: #eef5f8; outline: 1px solid #dde5ea; }
      .on::after { width: 20px; margin-left: -10px; background: #22828f; }
      .tray, .group { display: flex; align-items: center; }
      .tray { gap: 28px; }
      .group { gap: 10px; }
      .group.wide { gap: 18px; }
      .clock { width: 79px; text-align: right; font-size: 14px; line-height: 20px; }
      .badge { width: 20px; height: 20px; border-radius: 50%; background: #22828f; color: #fff; text-align: center; font-size: 12px; line-height: 20px; }
    `;
  }

  markup() {
    const apps = APPS.map(([i, c]) => `<button class="${c}" aria-label="${i}">${svg(i, 29)}</button>`).join("");
    return `
      <div class="apps">${apps}</div>
      <div class="tray">
        <div class="group wide">${svg("up", 16, 10)}${svg("zhong", 18, 20)}</div>
        ${svg("sogou", 20, 20)}
        <div class="group">
          ${svg("wifi", 20, 16)}${svg("speaker", 20, 16)}${svg("battery", 20, 16)}
          <div class="clock"><div>21:08</div><div>2022/9/28</div></div>
          <div class="badge">8</div>
        </div>
      </div>
    `;
  }
}

class DictCard extends BaseElement {
  styles() {
    return `
      :host { display: flex; flex-direction: column; position: fixed; left: 872px; top: 399px; width: 388px; height: 439px; padding: 27px 30px 18px; border: 1px solid #d9d9d9; background: #fff; color: #2a2c30; box-shadow: 0 2px 14px rgba(0, 0, 0, .16); font-size: 19px; line-height: 29px; white-space: nowrap; text-spacing-trim: space-all; }
      h2 { margin: 0; font-size: 30px; line-height: 36px; }
      .chips { display: flex; gap: 11px; margin: 9px 0 22px; }
      .chips button { display: flex; align-items: center; justify-content: center; gap: 12px; width: 66px; height: 40px; border-radius: 7px; background: #f3f5f8; color: #666; font-size: 18px; }
      .chips .star { width: 40px; }
      p { margin: 0 0 10px; }
      p span { margin-right: 4px; color: #999; font-size: 18px; }
      .more { display: flex; align-items: center; gap: 6px; align-self: flex-end; margin: auto 4px 0 0; color: #999; font-size: 17px; text-decoration: none; }
    `;
  }

  markup() {
    return `
      <h2>EFI</h2>
      <div class="chips">
        <button>英${svg("sound", 12, 14)}</button>
        <button>美${svg("sound", 12, 14)}</button>
        <button class="star" aria-label="收藏">${svg("star", 24)}</button>
      </div>
      <p>abbr. 电子控制燃油喷射系统<br>（electronic fuel injection）</p>
      <p>n. （Efi）人名；（萨摩）埃菲</p>
      <p><span>网络</span> 可扩展固件接口 / 各种新旧硬件 /<br>方法 /<br>可扩展固件接口(Extensible Firmware<br>Interface)</p>
      <a class="more" href="#">更多释义${svg("chevron", 8, 12)}</a>
    `;
  }
}

class ImeBar extends BaseElement {
  styles() {
    return `
      :host { display: flex; align-items: center; position: fixed; right: 2px; bottom: 60px; width: 218px; height: 32px; padding-left: 34px; border: 1px solid #a9c2ea; border-radius: 3px; background: #fff; color: #0a6bd6; }
      .logo { position: absolute; left: -6px; bottom: -1px; }
      button { flex: 1; display: grid; place-items: center; height: 30px; font-size: 18px; line-height: 30px; font-weight: 700; }
      button:last-child { background: linear-gradient(100deg, #d9f7fb, #f6ecfb 60%, #fff); }
    `;
  }

  markup() {
    return `
      <div class="logo">${svg("sogou", 40, 38)}</div>
      <button>中</button>
      <button aria-label="标点">${svg("imePunct", 16, 14)}</button>
      <button aria-label="语音">${svg("imeMic", 16, 20)}</button>
      <button aria-label="键盘">${svg("imeKeys", 18, 16)}</button>
      <button aria-label="皮肤">${svg("imeShirt", 18, 17)}</button>
      <button aria-label="工具箱">${svg("imeGrid", 18)}</button>
    `;
  }
}

class WaterMark extends BaseElement {
  styles() {
    return `
      :host { position: fixed; right: 15px; bottom: 4px; color: rgba(255, 255, 255, .75); font-size: 19px; line-height: 26px; text-shadow: 1px 1px 1px rgba(70, 70, 70, .8); pointer-events: none; white-space: nowrap; }
    `;
  }

  markup() { return `<slot></slot>`; }
}

customElements.define("title-bar", TitleBar);
customElements.define("menu-bar", MenuBar);
customElements.define("tool-bar", ToolBar);
customElements.define("drop-down", DropDown);
customElements.define("panel-tabs", PanelTabs);
customElements.define("evidence-tree", EvidenceTree);
customElements.define("side-pane", SidePane);
customElements.define("record-table", RecordTable);
customElements.define("scroll-bar", ScrollBar);
customElements.define("result-pane", ResultPane);
customElements.define("detail-pane", DetailPane);
customElements.define("status-bar", StatusBar);
customElements.define("task-bar", TaskBar);
customElements.define("dict-card", DictCard);
customElements.define("ime-bar", ImeBar);
customElements.define("water-mark", WaterMark);
customElements.define("forensic-app", ForensicApp);
</script>
</body>
</html>
